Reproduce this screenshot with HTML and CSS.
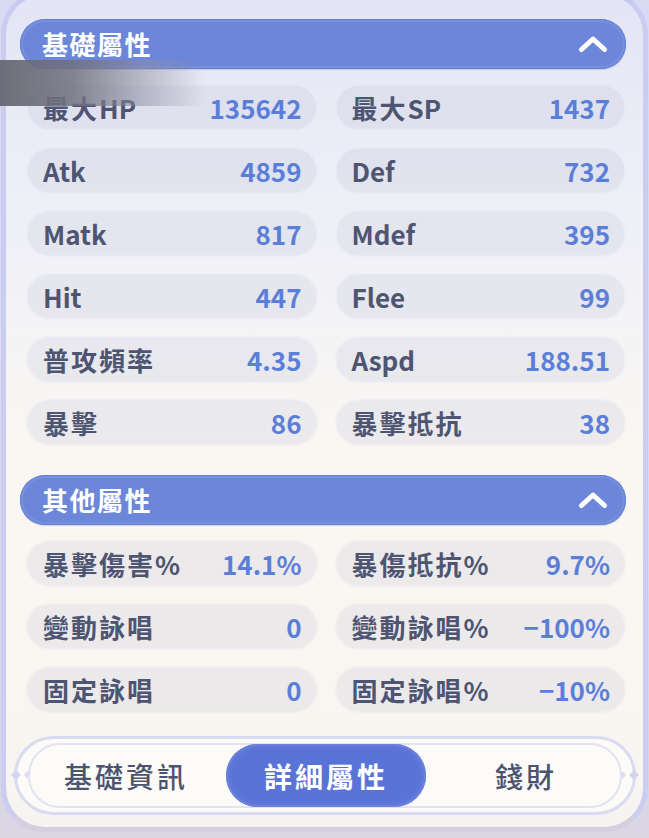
FILE: index.html
```html
<!DOCTYPE html>
<html lang="zh-Hant">
<head>
<meta charset="utf-8">
<title>屬性</title>
<link rel="stylesheet" href="styles.css">
</head>
<body>
<div class="frame">
  <section class="group">
    <div class="group-head">
      <span class="group-title">基礎屬性</span>
      <svg class="chev" width="30" height="18" viewBox="0 0 30 18"><path d="M3.5 14.5 L15 4 L26.5 14.5" fill="none" stroke="#fff" stroke-width="5" stroke-linecap="round" stroke-linejoin="round"/></svg>
    </div>
    <div class="stats">
      <div class="stat"><span class="label">最大<span class="label-lat">HP</span></span><span class="value">135642</span></div>
      <div class="stat"><span class="label">最大<span class="label-lat">SP</span></span><span class="value">1437</span></div>
      <div class="stat"><span class="label label-lat">Atk</span><span class="value">4859</span></div>
      <div class="stat"><span class="label label-lat">Def</span><span class="value">732</span></div>
      <div class="stat"><span class="label label-lat">Matk</span><span class="value">817</span></div>
      <div class="stat"><span class="label label-lat">Mdef</span><span class="value">395</span></div>
      <div class="stat"><span class="label label-lat">Hit</span><span class="value">447</span></div>
      <div class="stat"><span class="label label-lat">Flee</span><span class="value">99</span></div>
      <div class="stat"><span class="label">普攻頻率</span><span class="value">4.35</span></div>
      <div class="stat"><span class="label label-lat">Aspd</span><span class="value">188.51</span></div>
      <div class="stat"><span class="label">暴擊</span><span class="value">86</span></div>
      <div class="stat"><span class="label">暴擊抵抗</span><span class="value">38</span></div>
    </div>
  </section>
  <section class="group group-other">
    <div class="group-head">
      <span class="group-title">其他屬性</span>
      <svg class="chev" width="30" height="18" viewBox="0 0 30 18"><path d="M3.5 14.5 L15 4 L26.5 14.5" fill="none" stroke="#fff" stroke-width="5" stroke-linecap="round" stroke-linejoin="round"/></svg>
    </div>
    <div class="stats">
      <div class="stat"><span class="label">暴擊傷害%</span><span class="value">14.1%</span></div>
      <div class="stat"><span class="label">暴傷抵抗%</span><span class="value">9.7%</span></div>
      <div class="stat"><span class="label">變動詠唱</span><span class="value">0</span></div>
      <div class="stat"><span class="label">變動詠唱%</span><span class="value">−100%</span></div>
      <div class="stat"><span class="label">固定詠唱</span><span class="value">0</span></div>
      <div class="stat"><span class="label">固定詠唱%</span><span class="value">−10%</span></div>
    </div>
  </section>
  <nav class="tabs">
    <svg class="orn orn-left" width="22" height="14" viewBox="0 0 22 14"><path d="M0 7 L5 2 L10 7 L5 12 Z" fill="#d3d5ee"/><path d="M13 7 L16 3 L19 7 L16 11 Z" fill="#dcdef2"/></svg>
    <svg class="orn orn-right" width="22" height="14" viewBox="0 0 22 14"><path d="M22 7 L17 2 L12 7 L17 12 Z" fill="#d3d5ee"/><path d="M9 7 L6 3 L3 7 L6 11 Z" fill="#dcdef2"/></svg>
    <span class="tab">基礎資訊</span>
    <span class="tab tab-active">詳細屬性</span>
    <span class="tab">錢財</span>
  </nav>
</div>
<div class="shade"></div>
</body>
</html>
```
FILE: styles.css
```css
html, body {
  margin: 0;
  padding: 0;
}
body {
  width: 649px;
  height: 838px;
  overflow: hidden;
  position: relative;
  background: linear-gradient(180deg, #d9daf3 0%, #dcdaee 60%, #dad6e4 100%);
  font-family: "Noto Sans CJK TC", "Noto Sans", sans-serif;
}
.frame {
  box-sizing: border-box;
  margin: -10px 1px 0 1px;
  height: 842px;
  border: 5px solid;
  border-color: #c6c9ee #cacdef #d3cfde #cacdef;
  border-radius: 44px;
  background: linear-gradient(180deg, #e3e4f5 0%, #e9eaf6 12%, #eff0f7 28%, #f5f4f5 42%, #faf7f2 55%, #f9f6f1 85%, #f6f3f1 100%);
  padding: 24px 17px 0 14px;
}
.group-head {
  box-sizing: border-box;
  height: 50px;
  border-radius: 25px;
  background: #6c87da;
  box-shadow: inset 0 0 0 1px #6580d3, inset 0 0 0 3px rgba(255,255,255,0.08), 0 1px 1px rgba(80,100,180,0.25);
  display: flex;
  align-items: center;
  justify-content: space-between;
  padding: 0 18px 0 22px;
}
.group-title {
  color: #ffffff;
  font-size: 26px;
  font-weight: 700;
  letter-spacing: 1.5px;
  line-height: 1;
}
.chev {
  display: block;
}
.stats {
  margin-top: 15px;
  padding-left: 6px;
  display: grid;
  grid-template-columns: 1fr 1fr;
  grid-auto-rows: 47px;
  column-gap: 17px;
  row-gap: 16px;
}
.stat {
  box-sizing: border-box;
  display: flex;
  align-items: center;
  justify-content: space-between;
  padding: 0 16px 0 17px;
  border-radius: 24px;
  background: rgba(180, 183, 208, 0.2);
  box-shadow: inset 0 0 0 1.5px rgba(255,255,255,0.35);
}
.label {
  color: #4e5572;
  font-size: 26px;
  font-weight: 700;
  letter-spacing: 2px;
  line-height: 1;
}
.label-lat {
  letter-spacing: 0;
}
.value {
  color: #5b7fd9;
  font-size: 26px;
  font-weight: 700;
  line-height: 1;
}
.group-other {
  margin-top: 29px;
}
.tabs {
  position: relative;
  box-sizing: border-box;
  margin: 23px 0 0 -6px;
  width: 622px;
  height: 79px;
  border: 3px solid #d9dbf1;
  border-radius: 40px;
  background: #fcfbf8;
  padding: 5px 7px 5px 9px;
  display: grid;
  grid-template-columns: 1fr 1fr 1fr;
}
.tabs::before {
  content: "";
  position: absolute;
  left: 11px;
  right: 11px;
  top: 4px;
  bottom: 4px;
  border: 2px solid #e1e2f2;
  border-radius: 32px;
}
.orn {
  position: absolute;
  top: 29px;
}
.orn-left { left: -6px; }
.orn-right { right: -6px; }
.tab {
  position: relative;
  display: flex;
  align-items: center;
  justify-content: center;
  color: #4c5370;
  font-size: 28px;
  font-weight: 500;
  letter-spacing: 3px;
  border-radius: 32px;
}
.tab-active {
  background: #5a73d6;
  color: #ffffff;
  font-weight: 700;
  box-shadow: inset 0 0 0 2px #6a82dc, inset 0 0 10px rgba(140,160,235,0.35);
}
.shade {
  position: absolute;
  left: 0;
  top: 60px;
  width: 205px;
  height: 46px;
  background: linear-gradient(90deg, rgba(104,104,116,0.95) 0%, rgba(112,112,126,0.85) 35%, rgba(140,140,158,0.5) 70%, rgba(170,170,190,0) 100%);
}
```
